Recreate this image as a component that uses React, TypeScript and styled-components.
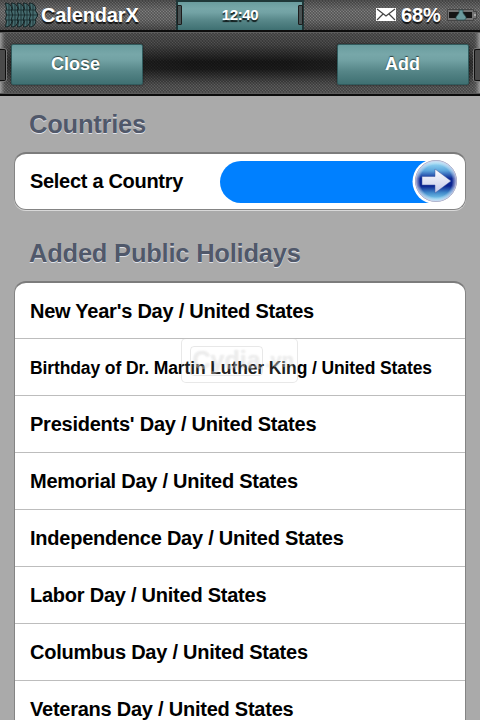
import React from "react";
import styled, { createGlobalStyle, css } from "styled-components";

const GlobalStyle = createGlobalStyle`
  * { box-sizing: border-box; }
  html, body { margin: 0; padding: 0; background: #aaa; overflow: hidden; }
`;

const Screen = styled.div`
  width: 480px;
  height: 720px;
  overflow: hidden;
  background: #aaa;
  font-family: "Liberation Sans", Arial, sans-serif;
  font-weight: bold;
`;

const mesh = css`
  repeating-linear-gradient(45deg, rgba(0, 0, 0, 0.2) 0 1px, transparent 1px 2.12px),
  repeating-linear-gradient(-45deg, rgba(0, 0, 0, 0.16) 0 1px, transparent 1px 2.12px)
`;

const teal = css`
  linear-gradient(#6a9c9e 0%, #77a7a9 24%, #72a2a4 38%, #558587 68%, #3f7072 100%)
`;

const StatusBar = styled.header`
  display: grid;
  grid-template-columns: 176px 128px 176px;
  height: 32px;
  color: #fff;
  text-shadow: 0 2px 1px rgba(0, 0, 0, 0.8);
  border-bottom: 2px solid #0c0c0c;
  background: ${mesh}, linear-gradient(#606060, #858585 35%, #808080 65%, #585858);
`;

const Carrier = styled.div`
  display: flex;
  align-items: center;
  padding-left: 5px;
  gap: 3px;
`;

const Label = styled.span<{ $size: number; $width: number }>`
  display: block;
  flex: none;
  width: ${(p) => p.$width}px;
  font-size: ${(p) => p.$size}px;
  letter-spacing: -0.15px;
  line-height: 30px;
  white-space: nowrap;
`;

const Clock = styled.div`
  display: flex;
  align-items: center;
  justify-content: space-between;
  padding: 0 1px 3px;
  border: 2px solid #1f3738;
  border-width: 2px 2px 0;
  font-size: 15px;
  letter-spacing: -0.4px;
  background: ${teal};
`;

const Clip = styled.i`
  width: 5px;
  height: 20px;
  margin: 0 -2px;
  border: 1px solid #1c1c1c;
  border-radius: 1px;
  background: #485253;
`;

const Indicators = styled.div`
  display: flex;
  align-items: center;
  justify-content: flex-end;
  gap: 5px;
  padding-right: 3px;
`;

const NavBar = styled.nav`
  display: flex;
  align-items: center;
  justify-content: space-between;
  height: 64px;
  border-bottom: 2px solid #0c0c0c;
  box-shadow: inset 0 1px #5c5c5c, inset 0 -1px #5a5a5a, inset 5px 0 4px -3px #aaa, inset -5px 0 4px -3px #aaa;
  background: ${mesh},
    linear-gradient(90deg, rgba(120, 120, 120, 0.35), rgba(95, 95, 95, 0.12) 28%, transparent 40%, transparent 60%, rgba(95, 95, 95, 0.12) 72%, rgba(120, 120, 120, 0.35)),
    linear-gradient(#606060, #525252 20%, #1c1c1c 48%, #202020 60%, #626262 86%, #686868 100%);
`;

const EdgeClip = styled.i<{ $right?: boolean }>`
  width: 6px;
  height: 32px;
  border: 1px solid #0f0f0f;
  border-width: ${(p) => (p.$right ? "1px 0 1px 1px" : "1px 1px 1px 0")};
  border-radius: ${(p) => (p.$right ? "2px 0 0 2px" : "0 2px 2px 0")};
  background: #4a4a4a;
  box-shadow: 0 0 0 1px #777;
`;

const NavSide = styled.div`
  display: flex;
  align-items: center;
  gap: 5px;
  padding-top: 3px;
`;

const NavButton = styled.button<{ $nudge?: number }>`
  width: 132px;
  height: 41px;
  padding: 0 ${(p) => p.$nudge ?? 0}px 1px 0;
  border: 1px solid #315b5d;
  border-radius: 2px;
  color: #fff;
  font: bold 18px "Liberation Sans", Arial, sans-serif;
  text-shadow: 0 -1px 1px rgba(0, 0, 0, 0.6);
  box-shadow: 0 0 2px #181818;
  background: ${teal};
`;

const Content = styled.main`
  padding: 0 14px;
`;

const SectionTitle = styled.h2<{ $top: number }>`
  margin: 0;
  padding: ${(p) => p.$top}px 0 1px 15px;
  color: #50586a;
  font-size: 25.500px;
  letter-spacing: -0.22px;
  line-height: 30px;
  text-shadow: 0 1px 0 #e0e2e8;
`;

const Card = styled.section<{ $top: number }>`
  margin-top: ${(p) => p.$top}px;
  border: 1px solid #848484;
  border-top: 2px solid #7c7c7c;
  border-radius: 12px;
  background: #fff;
  box-shadow: 0 1px #d9d9d9;
`;

const CountryRow = styled.div`
  display: flex;
  align-items: center;
  justify-content: space-between;
  height: 55px;
  padding: 0 7px 0 15px;
  color: #000;
  font-size: 20px;
  letter-spacing: -0.3px;
`;

const Slider = styled.div`
  display: flex;
  align-items: center;
  justify-content: flex-end;
  width: 238px;
  height: 42px;
  border-radius: 21px;
  background: linear-gradient(90deg, #0080ff 0 212px, #fff 212px);
`;

const HolidayRow = styled.div<{ $size?: number; $spacing?: number; $line?: number }>`
  height: 57px;
  padding-left: 15px;
  border-bottom: 1px solid #bdbdbd;
  color: #000;
  font-size: ${(p) => p.$size ?? 20}px;
  letter-spacing: ${(p) => p.$spacing ?? -0.24}px;
  line-height: ${(p) => p.$line ?? 57}px;
  white-space: nowrap;
  &:first-child { height: 56px; }
`;

const Watermark = styled.div`
  position: absolute;
  left: 181px;
  top: 338px;
  display: flex;
  align-items: center;
  width: 117px;
  height: 45px;
  padding-left: 8px;
  gap: 2px;
  border: 1px solid rgba(180, 180, 180, 0.3);
  border-radius: 5px;
  background: rgba(255, 255, 255, 0.12);
  color: rgba(255, 255, 255, 0.3);
  font-size: 20px;
  text-shadow: 0 0 2px rgba(120, 120, 120, 0.2);
`;

const WatermarkBox = styled.span`
  width: 73px;
  height: 30px;
  border: 1px solid rgba(180, 180, 180, 0.3);
  border-radius: 4px;
  font-size: 25px;
  line-height: 27px;
  text-align: center;
`;

const holidays: { name: string; size?: number; spacing?: number; line?: number }[] = [
  { name: "New Year's Day" },
  { name: "Birthday of Dr. Martin Luther King", size: 17.5, spacing: -0.11, line: 59 },
  { name: "Presidents' Day" },
  { name: "Memorial Day" },
  { name: "Independence Day" },
  { name: "Labor Day" },
  { name: "Columbus Day" },
  { name: "Veterans Day" },
];

const SignalIcon = () => (
  <svg width="33" height="28" viewBox="0 0 33 28">
    {[0, 6, 12, 18, 24].map((x) => (
      <g key={x} transform={`translate(${x} 0)`}>
        <path d="M.5 2Q6 2 7 8l-1 1 2.500 4v2L6 19l1 1q-1 6-6.500 6l1-6-1-2 1-4-1-4 1-2z" fill="#466c6f" stroke="#142426" strokeWidth="1" />
        <path d="M1 9h5M1 19h5M2 14h6M4 3v22" fill="none" stroke="#1b3032" strokeWidth=".9" />
      </g>
    ))}
  </svg>
);

const MailIcon = () => (
  <svg width="20" height="14" viewBox="0 0 20 14">
    <path d="M0 0h20v13H0z" fill="#fff" />
    <path d="M1 1l9 7 9-7M1 12l6-6M19 12l-6-6" fill="none" stroke="#444" strokeWidth="1.2" />
  </svg>
);

const BatteryIcon = () => (
  <svg width="30" height="16" viewBox="0 0 30 16">
    <path d="M.5 2.500h26v2h3v7h-3v2H.5z" fill="#747474" stroke="#454545" />
    <path d="M2 5h23v6H2z" fill="#151515" />
    <path d="M12 3h4v3l3 4v2l-2 1h-6l-2-1v-2l3-4z" fill="#6b9a9d" stroke="#294c4e" strokeWidth=".7" />
    <path d="M28 7v2" stroke="#ddd" />
  </svg>
);

const ArrowIcon = () => (
  <svg width="46" height="46" viewBox="0 0 46 46">
    <defs>
      <linearGradient id="orb" x1="0" y1="0" x2="0" y2="1">
        <stop offset="0" stopColor="#a8e7fb" />
        <stop offset=".25" stopColor="#5ca5dc" />
        <stop offset=".44" stopColor="#0c2794" />
        <stop offset=".62" stopColor="#0a2390" />
        <stop offset=".78" stopColor="#3f86c8" />
        <stop offset="1" stopColor="#94e5fb" />
      </linearGradient>
      <linearGradient id="arrow" x1="0" y1="0" x2="0" y2="1">
        <stop stopColor="#fff" />
        <stop offset="1" stopColor="#c2c8e8" />
      </linearGradient>
      <radialGradient id="edge">
        <stop offset=".78" stopColor="#fff" stopOpacity="0" />
        <stop offset="1" stopColor="#d5d5ef" stopOpacity=".8" />
      </radialGradient>
    </defs>
    <circle cx="23" cy="22.500" r="22.500" fill="#fff" />
    <circle cx="24" cy="22" r="20.500" fill="url(#orb)" stroke="#9c9eb8" />
    <circle cx="24" cy="22" r="20.500" fill="url(#edge)" />
    <path d="M10 17.500h13V10L39 22 23 34v-8H10z" fill="url(#arrow)" stroke="#415aa2" strokeWidth=".5" />
  </svg>
);

export default function App() {
  return (
    <Screen>
      <GlobalStyle />
      <StatusBar>
        <Carrier><SignalIcon /><Label $size={20} $width={98}>CalendarX</Label></Carrier>
        <Clock><Clip /><span>12:40</span><Clip /></Clock>
        <Indicators><MailIcon /><Label $size={20} $width={41}>68%</Label><BatteryIcon /></Indicators>
      </StatusBar>
      <NavBar>
        <NavSide><EdgeClip /><NavButton $nudge={3}>Close</NavButton></NavSide>
        <NavSide><NavButton $nudge={1}>Add</NavButton><EdgeClip $right /></NavSide>
      </NavBar>
      <Content>
        <SectionTitle $top={13}>Countries</SectionTitle>
        <Card $top={12}>
          <CountryRow>Select a Country<Slider><ArrowIcon /></Slider></CountryRow>
        </Card>
        <SectionTitle $top={28}>Added Public Holidays</SectionTitle>
        <Card $top={12}>
          {holidays.map((h) => (
            <HolidayRow key={h.name} $size={h.size} $spacing={h.spacing} $line={h.line}>{h.name} / United States</HolidayRow>
          ))}
        </Card>
      </Content>
      <Watermark><WatermarkBox>Cydia</WatermarkBox>.vn</Watermark>
    </Screen>
  );
}
